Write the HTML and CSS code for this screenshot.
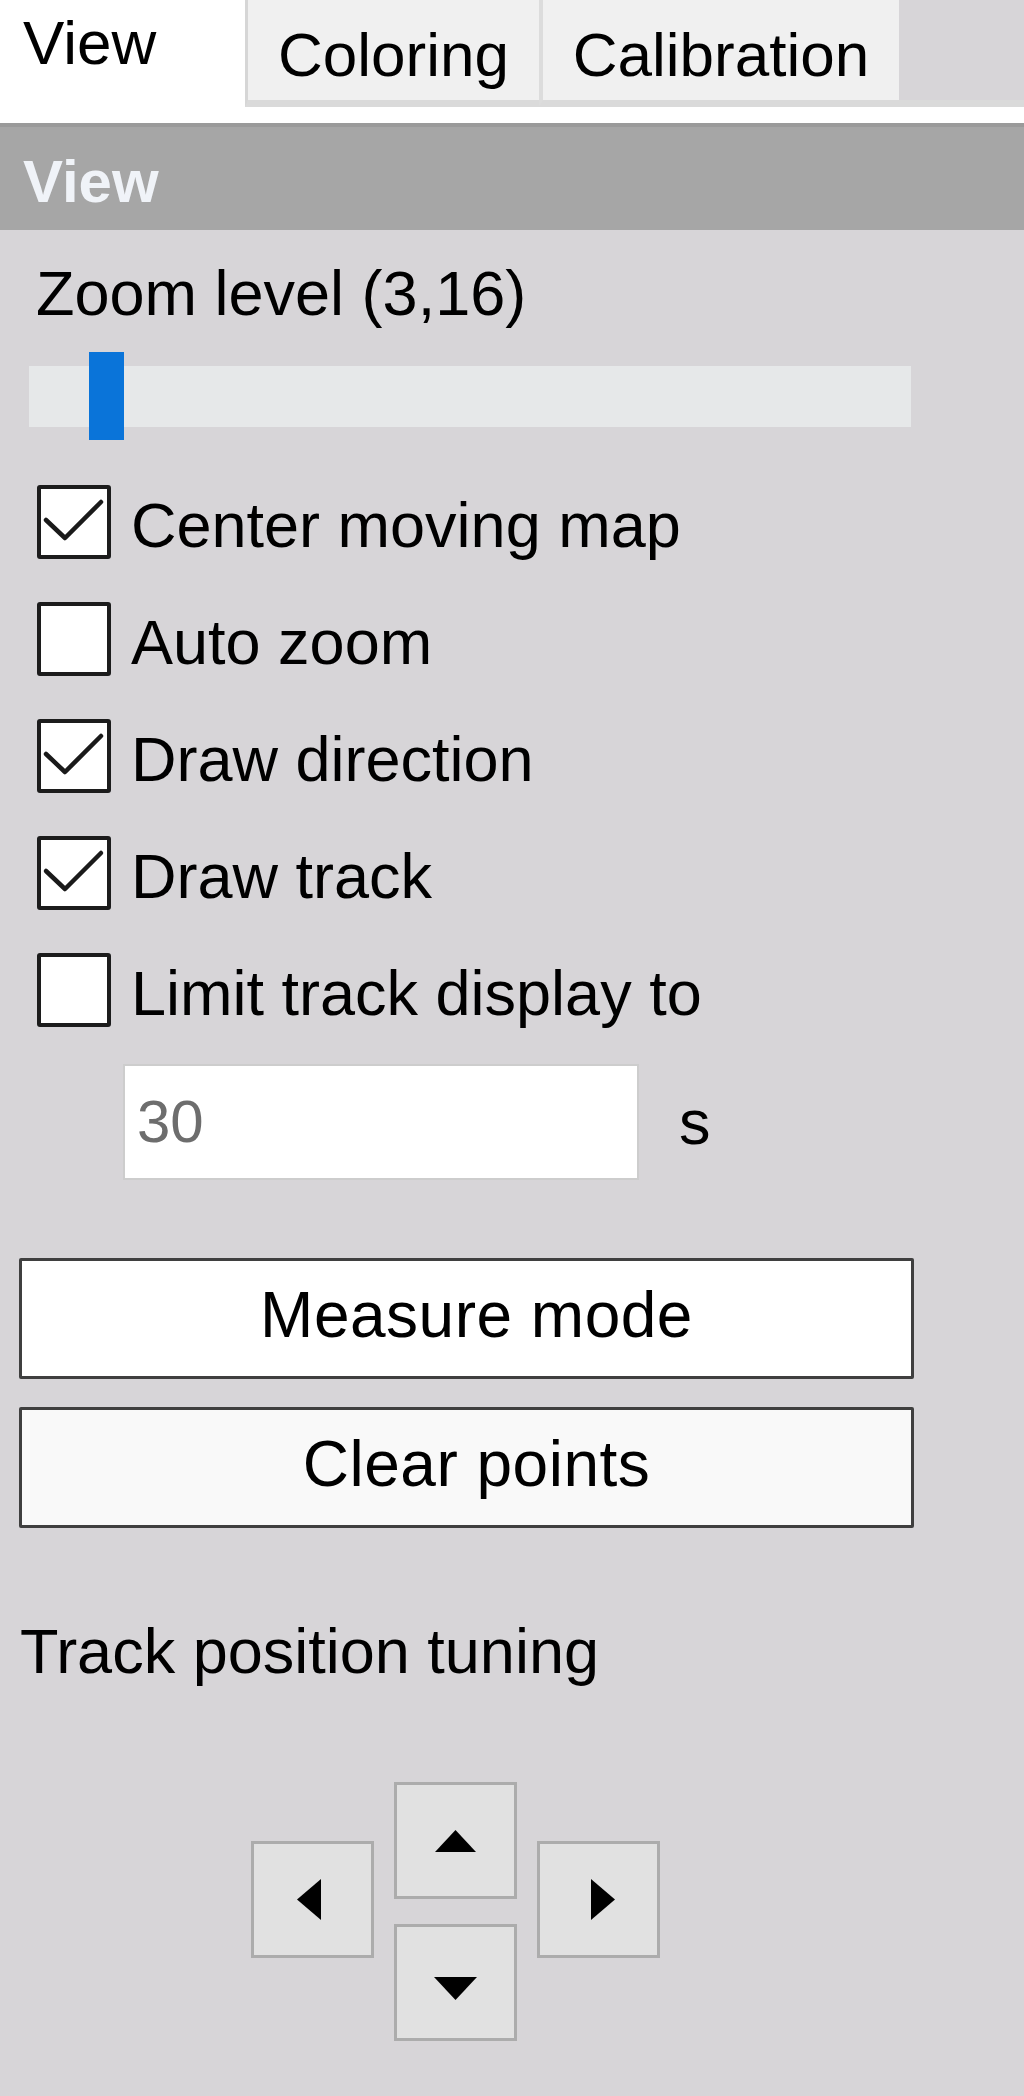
FILE: index.html
```html
<!DOCTYPE html>
<html lang="en">
<head>
<meta charset="utf-8">
<title>View</title>
<link rel="stylesheet" href="styles.css">
</head>
<body>
<div class="tabbar">
  <div class="tab tab-active">View</div>
  <div class="tab tab-coloring">Coloring</div>
  <div class="tab tab-calibration">Calibration</div>
  <div class="tab-fill"></div>
</div>
<div class="strip"></div>
<div class="section-header">View</div>
<div class="content">
  <div class="zoom-label">Zoom level (3,16)</div>
  <div class="slider">
    <div class="track"></div>
    <div class="thumb"></div>
  </div>
  <div class="checks">
    <div class="check-row">
      <span class="box"><svg width="66" height="66" viewBox="0 0 66 66"><polyline points="5,31 24,49 60,13" class="tick"/></svg></span>
      <span class="check-label">Center moving map</span>
    </div>
    <div class="check-row">
      <span class="box"></span>
      <span class="check-label">Auto zoom</span>
    </div>
    <div class="check-row">
      <span class="box"><svg width="66" height="66" viewBox="0 0 66 66"><polyline points="5,31 24,49 60,13" class="tick"/></svg></span>
      <span class="check-label">Draw direction</span>
    </div>
    <div class="check-row">
      <span class="box"><svg width="66" height="66" viewBox="0 0 66 66"><polyline points="5,31 24,49 60,13" class="tick"/></svg></span>
      <span class="check-label">Draw track</span>
    </div>
    <div class="check-row">
      <span class="box"></span>
      <span class="check-label">Limit track display to</span>
    </div>
  </div>
  <div class="limit-row">
    <div class="field">30</div>
    <span class="unit">s</span>
  </div>
  <div class="buttons">
    <button class="btn">Measure mode</button>
    <button class="btn btn-secondary">Clear points</button>
  </div>
  <div class="tuning-label">Track position tuning</div>
  <div class="pad">
    <div class="arrow arrow-up"><svg width="41" height="22" viewBox="0 0 41 22"><polygon points="20.5,0 41,22 0,22"/></svg></div>
    <div class="arrow arrow-left"><svg width="24" height="41" viewBox="0 0 24 41"><polygon points="0,20.5 24,0 24,41"/></svg></div>
    <div class="arrow arrow-right"><svg width="24" height="41" viewBox="0 0 24 41"><polygon points="0,0 24,20.5 0,41"/></svg></div>
    <div class="arrow arrow-down"><svg width="43" height="23" viewBox="0 0 43 23"><polygon points="0,0 43,0 21.5,23"/></svg></div>
  </div>
</div>
</body>
</html>
```
FILE: styles.css
```css
* {
  box-sizing: border-box;
}

html, body {
  margin: 0;
  padding: 0;
}

body {
  width: 1024px;
  height: 2096px;
  overflow: hidden;
  background: #d7d5d8;
  font-family: "Liberation Sans", Arial, sans-serif;
  font-size: 63px;
  line-height: 63px;
  color: #000;
}

/* Tabs */
.tabbar {
  display: flex;
  height: 107px;
  background: #d7d5d8;
}

.tab {
  height: 107px;
  font-size: 62px;
  line-height: 62px;
  white-space: nowrap;
}

.tab-active {
  width: 245px;
  background: #fff;
  padding: 12px 0 0 23px;
}

.tab-coloring,
.tab-calibration {
  background: #f0f0f0;
  border-bottom: 7px solid #dadada;
  text-align: center;
  padding-top: 24px;
}

.tab-coloring {
  width: 294px;
  border-left: 3px solid #d6d6d6;
}

.tab-calibration {
  width: 360px;
  border-left: 4px solid #dcdcdc;
}

.tab-fill {
  flex: 1;
  border-bottom: 7px solid #dadada;
}

.strip {
  height: 16px;
  background: #fff;
}

.section-header {
  height: 107px;
  background: #a6a6a6;
  border-top: 4px solid #9a9a9a;
  padding: 25px 0 0 23px;
  font-weight: bold;
  font-size: 60px;
  line-height: 60px;
  color: #f0f3f8;
}

/* Content */
.zoom-label {
  margin: 32px 0 0 36px;
}

.slider {
  position: relative;
  margin: 27px 0 0 29px;
  width: 882px;
  height: 88px;
  display: flex;
  align-items: center;
}

.track {
  width: 100%;
  height: 61px;
  background: #e6e8e9;
}

.thumb {
  position: absolute;
  left: 60px;
  top: 0;
  width: 35px;
  height: 88px;
  background: #0a74d9;
}

.checks {
  margin: 45px 0 0 37px;
  display: flex;
  flex-direction: column;
  gap: 43px;
}

.check-row {
  display: flex;
  height: 74px;
  gap: 20px;
}

.box {
  flex: none;
  width: 74px;
  height: 74px;
  border: 4px solid #1c1c1c;
  border-radius: 3px;
  background: #fff;
}

.box svg {
  display: block;
}

.tick {
  fill: none;
  stroke: #1a1a1a;
  stroke-width: 4.5;
  stroke-linecap: round;
  stroke-linejoin: round;
}

.check-label {
  margin-top: 9px;
  white-space: nowrap;
}

.limit-row {
  display: flex;
  align-items: center;
  gap: 40px;
  margin: 37px 0 0 123px;
}

.field {
  width: 516px;
  height: 116px;
  background: #fff;
  border: 2px solid #cdcdcd;
  padding-left: 12px;
  display: flex;
  align-items: center;
  font-size: 60px;
  line-height: 60px;
  color: #6d6d6d;
}

.buttons {
  display: flex;
  flex-direction: column;
  gap: 28px;
  width: 895px;
  margin: 78px 0 0 19px;
}

.btn {
  display: block;
  width: 895px;
  height: 121px;
  margin: 0;
  border: 3px solid #3f3f3f;
  border-radius: 2px;
  background: #fff;
  font-family: "Liberation Sans", Arial, sans-serif;
  font-size: 64px;
  line-height: 109px;
  letter-spacing: 0.5px;
  padding: 0 0 6px 20px;
  text-align: center;
  color: #000;
}

.btn-secondary {
  background: #f9f9f9;
}

.tuning-label {
  margin: 92px 0 0 20px;
}

/* Arrow pad */
.pad {
  display: grid;
  grid-template-columns: 123px 123px 123px;
  grid-template-rows: 59px 58px 25px 34px 83px;
  column-gap: 20px;
  width: max-content;
  margin: 99px 0 0 251px;
}

.arrow {
  background: #e1e1e1;
  border: 3px solid #acacac;
  display: flex;
  align-items: center;
  justify-content: center;
}

.arrow svg {
  display: block;
  fill: #000;
}

.arrow-up {
  grid-column: 2;
  grid-row: 1 / 3;
}

.arrow-left {
  grid-column: 1;
  grid-row: 2 / 5;
}

.arrow-left svg {
  margin-right: 7px;
}

.arrow-right {
  grid-column: 3;
  grid-row: 2 / 5;
}

.arrow-right svg {
  margin-left: 8px;
}

.arrow-down {
  grid-column: 2;
  grid-row: 4 / 6;
}

.arrow-down svg {
  margin-top: 12px;
}
```
